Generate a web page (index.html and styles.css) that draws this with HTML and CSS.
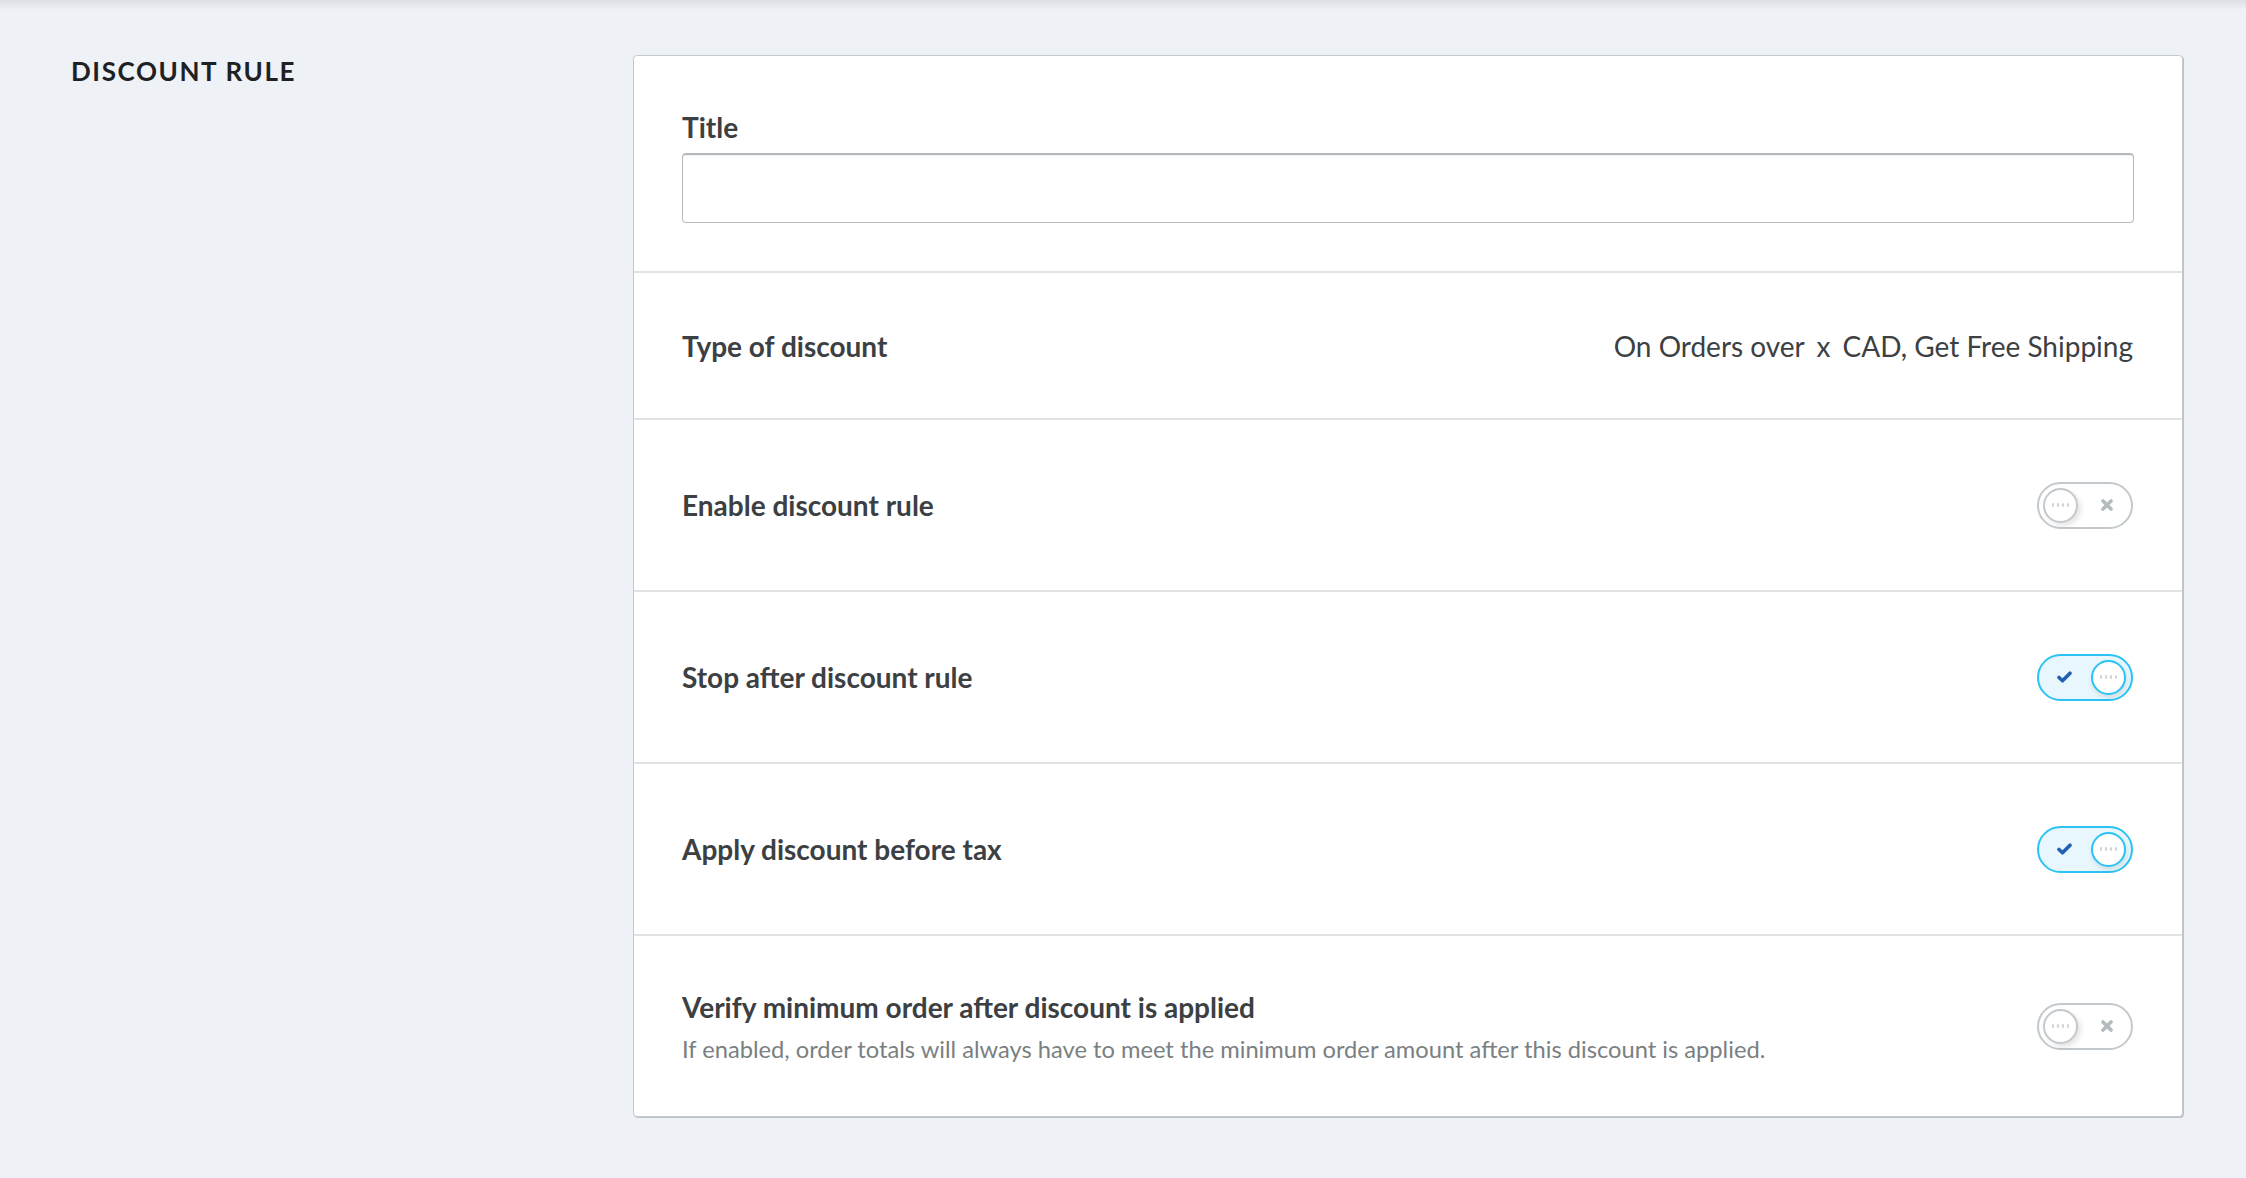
FILE: index.html
```html
<!DOCTYPE html>
<html lang="en">
<head>
<meta charset="utf-8">
<title>Discount rule</title>
<link rel="stylesheet" href="styles.css">
</head>
<body>
<div class="page">
  <aside class="side">
    <h2 class="side-title">DISCOUNT RULE</h2>
  </aside>
  <main class="card">
    <section class="field">
      <label class="label" for="title">Title</label>
      <input id="title" class="input" type="text">
    </section>

    <section class="row row-type">
      <div class="label">Type of discount</div>
      <div class="value">On Orders over <span class="var">x</span> CAD, Get Free Shipping</div>
    </section>

    <section class="row">
      <div class="label">Enable discount rule</div>
      <span class="toggle off">
        <span class="knob"><svg width="18" height="5" viewBox="0 0 18 5"><rect x="0" y="0" width="2" height="4" rx="1"/><rect x="5" y="0" width="2" height="4" rx="1"/><rect x="10" y="0" width="2" height="4" rx="1"/><rect x="15" y="0" width="2" height="4" rx="1"/></svg></span>
        <svg class="icon-x" width="12" height="12" viewBox="0 0 12 12"><path d="M2 2 L10 10 M10 2 L2 10"/></svg>
      </span>
    </section>

    <section class="row">
      <div class="label">Stop after discount rule</div>
      <span class="toggle on">
        <svg class="icon-check" width="15" height="12" viewBox="0 0 15 12"><path d="M2 6.5 L5.5 9.8 L13 2.2"/></svg>
        <span class="knob"><svg width="18" height="5" viewBox="0 0 18 5"><rect x="0" y="0" width="2" height="4" rx="1"/><rect x="5" y="0" width="2" height="4" rx="1"/><rect x="10" y="0" width="2" height="4" rx="1"/><rect x="15" y="0" width="2" height="4" rx="1"/></svg></span>
      </span>
    </section>

    <section class="row">
      <div class="label">Apply discount before tax</div>
      <span class="toggle on">
        <svg class="icon-check" width="15" height="12" viewBox="0 0 15 12"><path d="M2 6.5 L5.5 9.8 L13 2.2"/></svg>
        <span class="knob"><svg width="18" height="5" viewBox="0 0 18 5"><rect x="0" y="0" width="2" height="4" rx="1"/><rect x="5" y="0" width="2" height="4" rx="1"/><rect x="10" y="0" width="2" height="4" rx="1"/><rect x="15" y="0" width="2" height="4" rx="1"/></svg></span>
      </span>
    </section>

    <section class="row row-last">
      <div class="text">
        <div class="label">Verify minimum order after discount is applied</div>
        <div class="desc">If enabled, order totals will always have to meet the minimum order amount after this discount is applied.</div>
      </div>
      <span class="toggle off">
        <span class="knob"><svg width="18" height="5" viewBox="0 0 18 5"><rect x="0" y="0" width="2" height="4" rx="1"/><rect x="5" y="0" width="2" height="4" rx="1"/><rect x="10" y="0" width="2" height="4" rx="1"/><rect x="15" y="0" width="2" height="4" rx="1"/></svg></span>
        <svg class="icon-x" width="12" height="12" viewBox="0 0 12 12"><path d="M2 2 L10 10 M10 2 L2 10"/></svg>
      </span>
    </section>
  </main>
</div>
</body>
</html>
```

FILE: styles.css
```css
* { box-sizing: border-box; }

html, body { margin: 0; }

body {
  background: #eef1f6 linear-gradient(to bottom, #dcdfe4 0, #eef1f6 10px) no-repeat;
  font-family: Lato, "Noto Sans", sans-serif;
  color: #3c4043;
  min-height: 1178px;
}

.page {
  display: flex;
  align-items: flex-start;
  padding: 55px 63px 60px 71px;
}

.side {
  width: 562px;
  flex: none;
}

.side-title {
  margin: 3px 0 0;
  font-size: 26px;
  line-height: 26px;
  font-weight: 700;
  letter-spacing: 1.6px;
  color: #1e2123;
}

.card {
  flex: 1;
  background: #fff;
  border: 1px solid #c4cacc;
  border-radius: 4px;
  box-shadow: 1px 1px 0 #bcc3c6;
}

.field {
  padding: 54px 48px 48px;
  border-bottom: 2px solid #dfe3e5;
}

.label {
  display: block;
  font-size: 28px;
  line-height: 34px;
  font-weight: 700;
  color: #3c4043;
}

.field .label {
  margin-bottom: 9px;
}

.input {
  display: block;
  width: 100%;
  height: 70px;
  margin: 0;
  padding: 0 16px;
  border: 1px solid #b7bdc0;
  border-top: 2px solid #b3b9bc;
  border-radius: 4px;
  box-shadow: inset 0 1px 2px rgba(0, 0, 0, 0.06);
  background: #fff;
  font: 400 26px Lato, sans-serif;
  outline: none;
}

.row {
  display: flex;
  align-items: center;
  justify-content: space-between;
  height: 172px;
  padding: 0 49px 0 48px;
  border-bottom: 2px solid #dfe3e5;
}

.row-type {
  height: 147px;
}

.row-last {
  height: 180px;
  border-bottom: 0;
}

.value {
  font-size: 28px;
  line-height: 34px;
  font-weight: 400;
  color: #3c4043;
}

.var {
  margin: 0 5px;
}

.desc {
  margin-top: 11px;
  font-size: 23.7px;
  line-height: 28px;
  color: #7a7f82;
}

.toggle {
  flex: none;
  display: flex;
  align-items: center;
  justify-content: space-between;
  width: 96px;
  height: 47px;
  border-radius: 24px;
  border: 2px solid #c3c9cc;
  background: #fff;
}

.toggle.off {
  padding: 0 18px 0 4px;
}

.toggle.on {
  padding: 0 5px 0 18px;
  border-color: #2bc3f3;
  background: #e7f7fd;
}

.knob {
  width: 35px;
  height: 35px;
  border-radius: 50%;
  border: 2px solid #c3c9cc;
  background: #fff;
  display: flex;
  align-items: center;
  justify-content: center;
  box-shadow: 3px 3px 5px rgba(0, 0, 0, 0.1);
}

.toggle.on .knob {
  border-color: #2bc3f3;
  box-shadow: 1px 3px 5px rgba(0, 0, 0, 0.1);
}

.knob svg { fill: #cfd4d7; }

.icon-x path {
  stroke: #b4bbbe;
  stroke-width: 3.6;
  stroke-linecap: round;
  fill: none;
}

.icon-check path {
  stroke: #235fb3;
  stroke-width: 3.6;
  stroke-linecap: round;
  stroke-linejoin: round;
  fill: none;
}
```
